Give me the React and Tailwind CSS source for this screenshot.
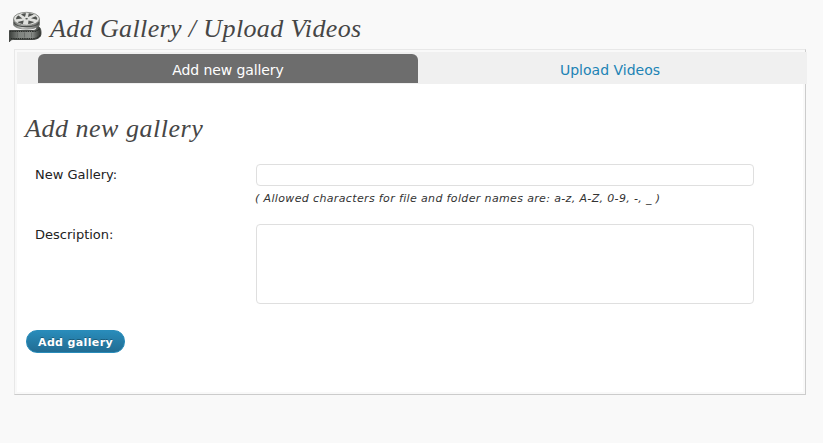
function FilmIcon() {
  return (
    <svg width="34" height="32" viewBox="0 0 34 32" className="block shrink-0">
      <defs>
        <linearGradient id="strip" x1="0" x2="1">
          <stop offset="0" stopColor="#3c403c" />
          <stop offset="0.3" stopColor="#7e827e" />
          <stop offset="0.7" stopColor="#8d918d" />
          <stop offset="1" stopColor="#303330" />
        </linearGradient>
        <linearGradient id="side" x1="0" x2="1">
          <stop offset="0" stopColor="#666966" />
          <stop offset="0.35" stopColor="#d0d1ce" />
          <stop offset="0.7" stopColor="#9b9d9a" />
          <stop offset="1" stopColor="#555755" />
        </linearGradient>
      </defs>
      <path d="M28 14.500c4.500 1 5 4 5 8 0 4-4 6-9 6H5.500c-2 0-3.200.5-4 2.300V19.500H24c4 0 6-1.500 4-5Z" fill="url(#strip)" stroke="#3c3f3c" strokeWidth="0.900" />
      <path d="M2 20.500h22c4 0 6-1 8-3M3 27.700h21c4 0 6-1.200 8-3.200" fill="none" stroke="#2b2e2b" strokeWidth="1.200" strokeDasharray="1.500 0.700" />
      <path d="M9.500 21.500v5M16.500 21.500v5M23.500 21.500v5" stroke="#5d605d" strokeWidth="0.700" />
      <path d="M5.500 8v6c2.500 5.500 23.500 5.500 26 0V8" fill="url(#side)" stroke="#777a77" strokeWidth="0.700" />
      <path d="M5.800 11.500c3 5.500 22.400 5.500 25.400 0" fill="none" stroke="#4a4d4a" strokeWidth="1.100" />
      <ellipse cx="18.500" cy="7.800" rx="13" ry="6.500" fill="#dfe0dd" stroke="#777a76" strokeWidth="0.800" />
      <g fill="#505350">
        <path d="m17 6-4-2.600c1-.7 3-1.100 5-1.100Z" />
        <path d="m20 6 .8-3.700c2 .1 4 .6 5 1.300Z" />
        <path d="m14.300 7.500-6.200.7c-.3-1.500.7-2.900 2.400-3.800Z" />
        <path d="m23 7.200 4.600-2c1.300.9 1.900 2.200 1.500 3.500Z" />
        <path d="m15.700 9.500-.8 3.500c-2.300-.3-4.300-1-5.400-2Z" />
        <path d="m20.500 9.600 5.600 1.500c-1.200 1-3.500 1.800-6 2Z" />
        <ellipse cx="18.600" cy="7.800" rx="1.300" ry="0.700" />
      </g>
    </svg>
  );
}

export default function App() {
  return (
    <div className="h-[443px] w-[823px] overflow-hidden bg-[#f9f9f9] font-['DejaVu_Sans',sans-serif] text-[13px] text-[#222]">
      <header className="flex h-[49px] pl-2 pt-[11px]">
        <FilmIcon />
        <h1 className="ml-2 mt-[3px] whitespace-nowrap font-['Liberation_Serif',serif] text-[26px] italic leading-[30px] tracking-[0.38px] text-[#464646]">
          Add Gallery / Upload Videos
        </h1>
      </header>
      <main className="ml-[14px] h-[346px] w-[792px] border border-b-[#ccc] border-l-[#e8e8e8] border-r-[#ccc] border-t-[#e8e8e8] p-[2px]">
        <div className="h-[340px] w-[786px] bg-white">
          <nav className="flex h-8 w-[790px] bg-[#f0f0f0] pl-[21px] pt-[2px] text-[14px] leading-[33px]">
            <a className="h-[29px] w-[380px] rounded-t-[6px] bg-[#6d6d6d] text-center text-white">
              <span className="tracking-[-0.1px]">Add new gallery</span>
            </a>
            <a className="h-[29px] w-[384px] text-center text-[#2183b5]">
              <span>Upload Videos</span>
            </a>
          </nav>
          <h2 className="ml-2 mt-[30px] h-[50px] whitespace-nowrap font-['Liberation_Serif',serif] text-[26px] italic leading-[30px] tracking-[0.52px] text-[#464646]">
            Add new gallery
          </h2>
          <form>
            <div className="flex h-[60px] pl-[18px]">
              <label className="w-[221px] leading-[21px]">New Gallery:</label>
              <div>
                <input className="block h-[22px] w-[498px] rounded-[4px] border border-[#dfdfdf] bg-white" />
                <p className="-ml-px mt-[4px] whitespace-nowrap text-[11px] italic leading-[18px] tracking-[0.36px] text-[#333]">
                  ( Allowed characters for file and folder names are: a-z, A-Z, 0-9, -, _ )
                </p>
              </div>
            </div>
            <div className="flex h-20 pl-[18px]">
              <label className="w-[221px] leading-[21px]">Description:</label>
              <textarea className="block h-20 w-[498px] resize-none rounded-[4px] border border-[#dfdfdf] bg-white" />
            </div>
            <button
              type="button"
              className="ml-[9px] mt-[26px] block h-[23px] w-[99px] whitespace-nowrap rounded-[11px] border border-[#298cba] bg-linear-to-b from-[#298cba] to-[#216c93] text-[11px] font-bold leading-[23px] tracking-[0.36px] text-white [text-shadow:0_-1px_0_rgba(0,0,0,0.3)]"
            >
              Add gallery
            </button>
          </form>
        </div>
      </main>
    </div>
  );
}
